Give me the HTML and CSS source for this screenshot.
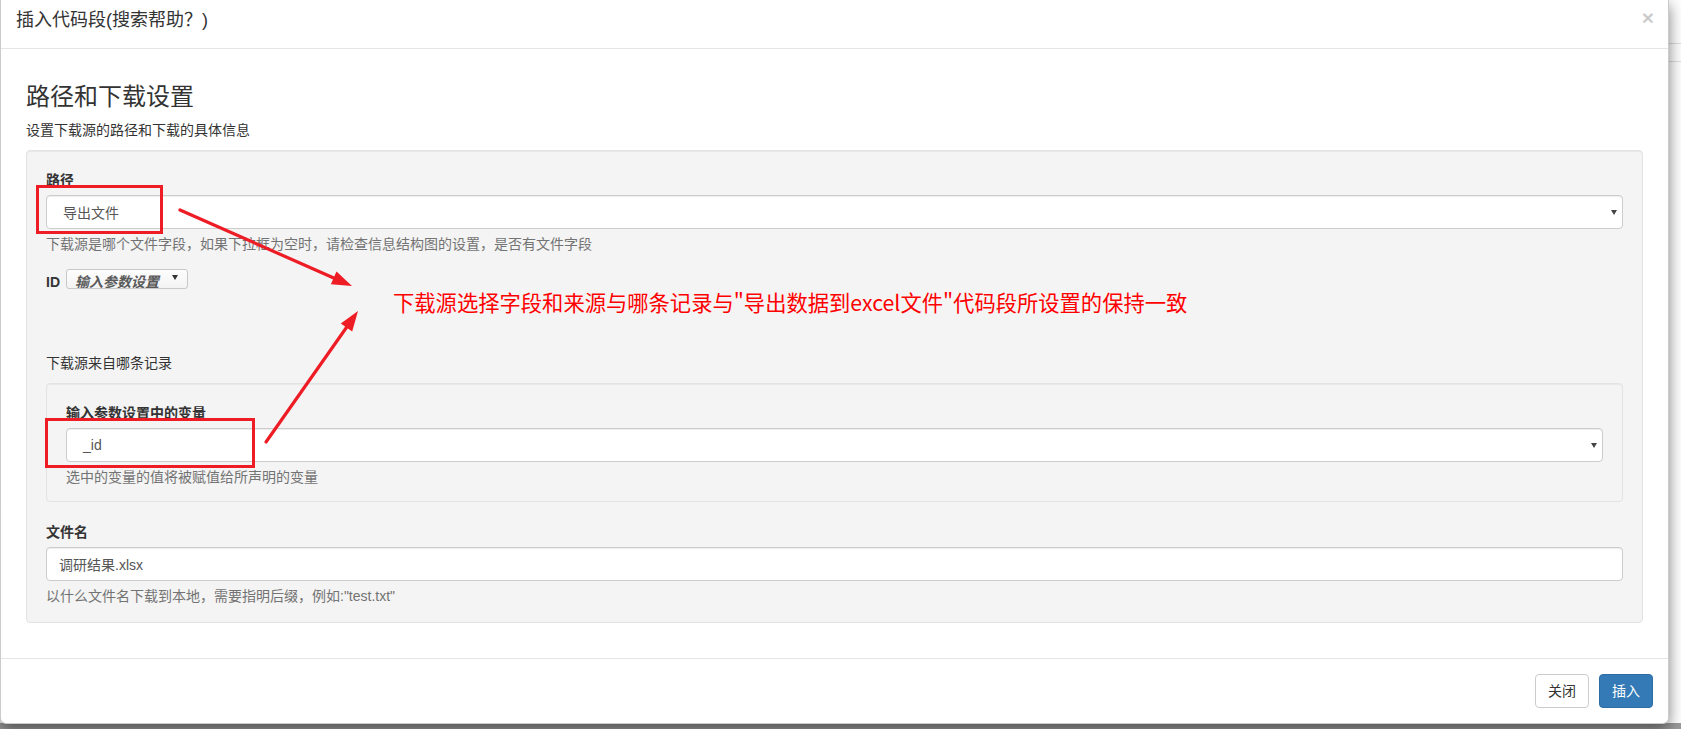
FILE: index.html
```html
<!DOCTYPE html>
<html lang="zh-CN">
<head>
<meta charset="utf-8">
<title>插入代码段</title>
<link rel="stylesheet" href="styles.css">
</head>
<body>
<div class="modal">
  <div class="modal-header">
    <h4 class="modal-title">插入代码段(搜索帮助？)</h4>
    <span class="close">×</span>
  </div>
  <div class="modal-body">
    <h3 class="section-title">路径和下载设置</h3>
    <p class="section-desc">设置下载源的路径和下载的具体信息</p>
    <div class="well">
      <div class="form-group">
        <label class="field-label">路径</label>
        <div class="select"><span>导出文件</span><i class="caret"></i></div>
        <p class="help">下载源是哪个文件字段，如果下拉框为空时，请检查信息结构图的设置，是否有文件字段</p>
      </div>
      <div class="id-row">
        <label class="id-label">ID</label>
        <div class="mini-select"><span>输入参数设置</span><i class="caret mini-caret"></i></div>
      </div>
      <p class="record-title">下载源来自哪条记录</p>
      <div class="well well-inner">
        <label class="field-label">输入参数设置中的变量</label>
        <div class="select"><span>_id</span><i class="caret"></i></div>
        <p class="help">选中的变量的值将被赋值给所声明的变量</p>
      </div>
      <div class="form-group form-group-last">
        <label class="field-label">文件名</label>
        <div class="input">调研结果.xlsx</div>
        <p class="help">以什么文件名下载到本地，需要指明后缀，例如:"test.txt"</p>
      </div>
    </div>
  </div>
  <div class="modal-footer">
    <button class="btn btn-default">关闭</button>
    <button class="btn btn-primary">插入</button>
  </div>
</div>

<div class="annot">
  <div class="mark-box mark-1"></div>
  <div class="mark-box mark-2"></div>
  <svg class="arrows" width="1681" height="729" viewBox="0 0 1681 729">
    <line x1="180" y1="210" x2="336" y2="279" stroke="#ee1c25" stroke-width="3.2" stroke-linecap="round"/>
    <polygon points="352,286 330.9,284.3 336.5,271.5" fill="#ee1c25"/>
    <line x1="266" y1="442" x2="347.5" y2="326" stroke="#ee1c25" stroke-width="3.2" stroke-linecap="round"/>
    <polygon points="358,311 352.2,331.4 340.8,323.4" fill="#ee1c25"/>
  </svg>
  <div class="note">下载源选择字段和来源与哪条记录与"导出数据到excel文件"代码段所设置的保持一致</div>
</div>
</body>
</html>
```

FILE: styles.css
```css
html, body {
  margin: 0;
  padding: 0;
}

body {
  position: relative;
  width: 1681px;
  height: 729px;
  overflow: hidden;
  font-family: "Liberation Sans", "Noto Sans CJK SC", sans-serif;
  font-size: 14px;
  color: #333;
  background:
    linear-gradient(to top, #9a9a9a 6px, transparent 6px),
    linear-gradient(to bottom, transparent 43px, #dedede 43px, #dedede 44px, transparent 44px, transparent 61px, #dedede 61px, #dedede 62px, transparent 62px),
    #ffffff;
}

.modal {
  position: relative;
  width: 1669px;
  box-sizing: border-box;
  background: #fff;
  border: 1px solid rgba(0, 0, 0, 0.2);
  border-top: 0;
  border-radius: 0 0 6px 6px;
  box-shadow: 0 5px 15px rgba(0, 0, 0, 0.5);
}

.modal-header {
  position: relative;
  padding: 8px 15px 15px;
  border-bottom: 1px solid #e5e5e5;
}

.modal-title {
  margin: 0;
  font-size: 18px;
  line-height: 25px;
  font-weight: normal;
  color: #333;
}

.close {
  position: absolute;
  right: 14px;
  top: 7px;
  font-size: 21px;
  font-weight: bold;
  line-height: 21px;
  color: #000;
  opacity: 0.2;
}

.modal-body {
  padding: 15px 25px 35px;
}

.section-title {
  margin: 20px 0 10px;
  font-size: 24px;
  line-height: 26px;
  font-weight: normal;
  color: #333;
}

.section-desc {
  margin: 0 0 10px;
  line-height: 20px;
}

.well {
  background: #f4f4f4;
  border: 1px solid #e3e3e3;
  border-radius: 4px;
  padding: 19px 19px 16px;
  box-shadow: inset 0 1px 1px rgba(0, 0, 0, 0.05);
}

.well-inner {
  padding-bottom: 14px;
  margin: 0 0 20px;
}

.form-group {
  margin-bottom: 15px;
}

.form-group-last {
  margin-bottom: 0;
}

.field-label {
  display: block;
  font-weight: bold;
  line-height: 20px;
  margin-bottom: 5px;
}

.select,
.input {
  height: 34px;
  box-sizing: border-box;
  border: 1px solid #ccc;
  border-radius: 4px;
  background: #fff;
  color: #555;
  display: flex;
  align-items: center;
  box-shadow: inset 0 1px 1px rgba(0, 0, 0, 0.075);
}

.select {
  padding: 0 5px 0 16px;
  justify-content: space-between;
}

.input {
  padding: 0 12px;
}

.caret {
  width: 0;
  height: 0;
  border-left: 3px solid transparent;
  border-right: 3px solid transparent;
  border-top: 5px solid #444;
}

.help {
  margin: 5px 0 0;
  line-height: 20px;
  color: #737373;
}

.id-row {
  display: flex;
  align-items: flex-start;
  height: 20px;
}

.id-label {
  font-weight: bold;
  line-height: 20px;
  margin-top: 3px;
  width: 20px;
  color: #333;
}

.mini-select {
  position: relative;
  width: 122px;
  height: 20px;
  box-sizing: border-box;
  border: 1px solid #c8c8c8;
  border-radius: 3px;
  background: linear-gradient(#fdfdfd, #f3f3f3);
  overflow: hidden;
  padding: 2px 0 0 8px;
  line-height: 20px;
  font-style: italic;
  font-weight: bold;
  color: #5a5a5a;
}

.mini-caret {
  position: absolute;
  right: 9px;
  top: 5px;
  border-top-color: #333;
}

.record-title {
  margin: 64px 0 10px;
  line-height: 20px;
}

.modal-footer {
  border-top: 1px solid #e5e5e5;
  padding: 15px;
  display: flex;
  justify-content: flex-end;
  gap: 10px;
}

.btn {
  height: 34px;
  box-sizing: border-box;
  padding: 0 12px;
  font-family: inherit;
  font-size: 14px;
  line-height: 20px;
  border-radius: 4px;
  border: 1px solid #ccc;
}

.btn-default {
  background: #fff;
  color: #333;
}

.btn-primary {
  background: #337ab7;
  border-color: #2e6da4;
  color: #fff;
}

.annot {
  position: absolute;
  left: 0;
  top: 0;
  width: 1681px;
  height: 729px;
  pointer-events: none;
}

.arrows {
  position: absolute;
  left: 0;
  top: 0;
}

.mark-box {
  position: absolute;
  box-sizing: border-box;
  border: 3px solid #ee1c25;
}

.mark-1 {
  left: 36px;
  top: 185px;
  width: 127px;
  height: 49px;
}

.mark-2 {
  left: 45px;
  top: 418px;
  width: 210px;
  height: 50px;
}

.note {
  position: absolute;
  left: 393px;
  top: 290px;
  font-family: "Noto Sans CJK SC", sans-serif;
  font-size: 21.3px;
  line-height: 24px;
  color: #f00;
  white-space: nowrap;
}
```
